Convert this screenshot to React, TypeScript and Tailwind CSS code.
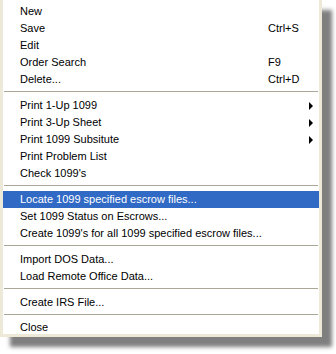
type Item = { label: string; shortcut?: string; sub?: boolean; active?: boolean };

const groups: Item[][] = [
  [
    { label: "New" },
    { label: "Save", shortcut: "Ctrl+S" },
    { label: "Edit" },
    { label: "Order Search", shortcut: "F9" },
    { label: "Delete...", shortcut: "Ctrl+D" },
  ],
  [
    { label: "Print 1-Up 1099", sub: true },
    { label: "Print 3-Up Sheet", sub: true },
    { label: "Print 1099 Subsitute", sub: true },
    { label: "Print Problem List" },
    { label: "Check 1099's" },
  ],
  [
    { label: "Locate 1099 specified escrow files...", active: true },
    { label: "Set 1099 Status on Escrows..." },
    { label: "Create 1099's for all 1099 specified escrow files..." },
  ],
  [{ label: "Import DOS Data..." }, { label: "Load Remote Office Data..." }],
  [{ label: "Create IRS File..." }],
  [{ label: "Close" }],
];

function Row({ item, last }: { item: Item; last?: boolean }) {
  return (
    <div
      className={`flex items-center pl-[17px] ${last ? "h-[14px]" : "h-[17px]"} ${
        item.active ? "bg-[#316ac5] text-white" : "text-black"
      }`}
    >
      <span className="w-[248px] shrink-0 whitespace-nowrap">{item.label}</span>
      {item.shortcut && <span className="whitespace-nowrap">{item.shortcut}</span>}
      {item.sub && (
        <span className="ml-auto mr-[6px] w-0 h-0 border-y-[4px] border-y-transparent border-l-[4px] border-l-black" />
      )}
    </div>
  );
}

export default function App() {
  return (
    <div className="w-[336px] h-[354px] bg-white overflow-hidden">
      <div
        className="w-[322px] bg-white pt-[3px] border-x-[3px] border-b-[3px] border-[#ece9d8] shadow-[10px_10px_4px_rgba(0,0,0,0.5)] text-[11px]"
        style={{ fontFamily: '"Liberation Sans", Arial, sans-serif' }}
      >
        {groups.map((group, gi) => (
          <div key={gi}>
            {gi > 0 && (
              <div className="h-[9px] pt-[3px] px-[1px]">
                <div className="h-px bg-[#aca899]" />
              </div>
            )}
            {group.map((item, ii) => (
              <Row key={item.label} item={item} last={gi === groups.length - 1 && ii === group.length - 1} />
            ))}
          </div>
        ))}
      </div>
    </div>
  );
}
